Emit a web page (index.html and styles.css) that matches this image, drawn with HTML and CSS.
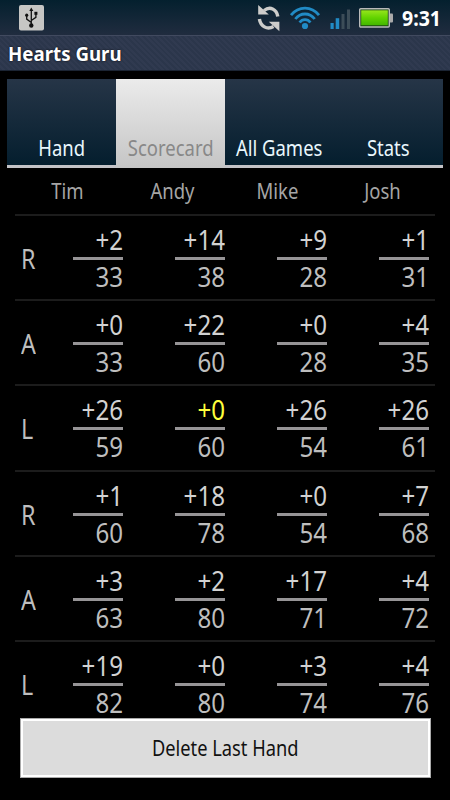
FILE: index.html
```html
<!DOCTYPE html>
<html lang="en">
<head>
<meta charset="UTF-8">
<meta name="viewport" content="width=device-width, initial-scale=1.0">
<title>Hearts Guru</title>
<link rel="stylesheet" href="styles.css">
</head>
<body>
	<!-- Status bar -->
	<div class="status-bar">
		<svg class="usb-icon" width="25" height="26" viewBox="0 0 25 26">
			<rect x="0" y="0" width="25" height="25.5" rx="2" fill="#c6c6c4"/>
			<path d="M12.3 5v16M12.3 17.5l-4.6-3.4v-3.6M12.3 15.5l4.6-3.2V8.8" fill="none" stroke="#111" stroke-width="1.3"/>
			<path d="M10.3 6l2-3.4 2 3.4z" fill="#111"/>
			<circle cx="12.3" cy="20.5" r="2.2" fill="#111"/>
			<circle cx="7.7" cy="10.2" r="1.6" fill="#111"/>
			<rect x="15.4" y="6.8" width="3" height="3" fill="#111"/>
		</svg>
		<div class="status-right">
			<svg class="sync-icon" width="24" height="28" viewBox="0 0 24 28">
				<path d="M7 6.5C13 2 19.5 5 20.8 12.5" fill="none" stroke="#cdcdcb" stroke-width="3.4"/>
				<path d="M1.2 1V10.4H11.8z" fill="#cdcdcb"/>
				<path d="M2.4 15C3.5 22 10 26.5 16.5 22.5" fill="none" stroke="#cdcdcb" stroke-width="3.4"/>
				<path d="M22.4 27.3V17.8H11.8z" fill="#cdcdcb"/>
			</svg>
			<svg class="wifi-icon" width="32" height="24" viewBox="0 0 32 24">
				<g fill="none" stroke="#218bc5" stroke-width="2.8">
					<path d="M2 9.2C9.5-.2 22.5-.2 30 9.2"/>
					<path d="M6.3 13C11.5 6.3 20.5 6.3 25.7 13"/>
					<path d="M10.6 16.5C13.5 12.6 18.5 12.6 21.4 16.5"/>
				</g>
				<circle cx="16" cy="20" r="3.1" fill="#218bc5"/>
			</svg>
			<svg class="signal-icon" width="21" height="21" viewBox="0 0 21 21">
				<rect x="0.5" y="14" width="3.2" height="6" fill="#218bc5"/>
				<rect x="5.7" y="9.2" width="3.5" height="10.8" fill="#218bc5"/>
				<rect x="11.5" y="5" width="3" height="15" fill="#3c4d58"/>
				<rect x="17" y="0.5" width="3" height="19.5" fill="#3c4d58"/>
			</svg>
			<svg class="battery-icon" width="34" height="20" viewBox="0 0 34 20">
				<defs>
					<linearGradient id="charge" x1="0" y1="0" x2="0" y2="1">
						<stop offset="0" stop-color="#96e51c"/>
						<stop offset="0.5" stop-color="#62d300"/>
						<stop offset="1" stop-color="#42b600"/>
					</linearGradient>
				</defs>
				<rect x="30" y="5.5" width="4" height="9" rx="1" fill="#aaa"/>
				<rect x="0.7" y="0.7" width="29.6" height="18.3" rx="1" fill="#154010" stroke="#bababa" stroke-width="1.4"/>
				<rect x="2.2" y="2.3" width="26.6" height="15" fill="url(#charge)"/>
			</svg>
			<span class="clock">9:31</span>
		</div>
	</div>

	<!-- Title bar -->
	<div class="title-bar"><span>Hearts Guru</span></div>

	<!-- Tabs -->
	<div class="tabs">
		<a class="tab"><span>Hand</span></a>
		<a class="tab active"><span>Scorecard</span></a>
		<a class="tab"><span>All Games</span></a>
		<a class="tab"><span>Stats</span></a>
	</div>

	<!-- Scorecard -->
	<div class="scorecard">
		<div class="players">
			<span>Tim</span><span>Andy</span><span>Mike</span><span>Josh</span>
		</div>
		<div class="hand">
			<span class="pass">R</span>
			<div class="score"><span>+2</span><hr><span>33</span></div>
			<div class="score"><span>+14</span><hr><span>38</span></div>
			<div class="score"><span>+9</span><hr><span>28</span></div>
			<div class="score"><span>+1</span><hr><span>31</span></div>
		</div>
		<div class="hand">
			<span class="pass">A</span>
			<div class="score"><span>+0</span><hr><span>33</span></div>
			<div class="score"><span>+22</span><hr><span>60</span></div>
			<div class="score"><span>+0</span><hr><span>28</span></div>
			<div class="score"><span>+4</span><hr><span>35</span></div>
		</div>
		<div class="hand">
			<span class="pass">L</span>
			<div class="score"><span>+26</span><hr><span>59</span></div>
			<div class="score moon"><span>+0</span><hr><span>60</span></div>
			<div class="score"><span>+26</span><hr><span>54</span></div>
			<div class="score"><span>+26</span><hr><span>61</span></div>
		</div>
		<div class="hand">
			<span class="pass">R</span>
			<div class="score"><span>+1</span><hr><span>60</span></div>
			<div class="score"><span>+18</span><hr><span>78</span></div>
			<div class="score"><span>+0</span><hr><span>54</span></div>
			<div class="score"><span>+7</span><hr><span>68</span></div>
		</div>
		<div class="hand">
			<span class="pass">A</span>
			<div class="score"><span>+3</span><hr><span>63</span></div>
			<div class="score"><span>+2</span><hr><span>80</span></div>
			<div class="score"><span>+17</span><hr><span>71</span></div>
			<div class="score"><span>+4</span><hr><span>72</span></div>
		</div>
		<div class="hand">
			<span class="pass">L</span>
			<div class="score"><span>+19</span><hr><span>82</span></div>
			<div class="score"><span>+0</span><hr><span>80</span></div>
			<div class="score"><span>+3</span><hr><span>74</span></div>
			<div class="score"><span>+4</span><hr><span>76</span></div>
		</div>
	</div>

	<button class="delete-button"><span>Delete Last Hand</span></button>
</body>
</html>
```
FILE: styles.css
```css
* {
	box-sizing: border-box;
}

body {
	width: 450px;
	height: 800px;
	margin: 0;
	overflow: hidden;
	background-color: #000;
	font-family: "Noto Sans", "Open Sans", sans-serif;
}

/* Labels are drawn slightly condensed */
.clock, .title-bar span, .tab span, .players span, .pass, .score span,
.delete-button span {
	display: block;
	white-space: nowrap;
	transform: scaleX(0.88);
}

/* Status bar */
.status-bar {
	display: flex;
	justify-content: space-between;
	height: 35px;
	padding: 5px 9px 0 19px;
	background: linear-gradient(#04202e, #202c3f);
}

.status-right {
	display: flex;
	align-items: flex-start;
}

.sync-icon {
	margin-top: -1px;
}

.wifi-icon {
	margin: 1px 0 0 8px;
}

.signal-icon {
	margin: 4px 0 0 9px;
}

.battery-icon {
	margin: 3px 0 0 8px;
}

.clock {
	width: 39px;
	margin-left: 9px;
	color: #fff;
	font-size: 21px;
	font-weight: bold;
	line-height: 26px;
	transform: scaleX(0.93);
	transform-origin: left;
}

/* Title bar */
.title-bar {
	height: 36px;
	padding-left: 8px;
	border-top: 1px solid #414a5f;
	border-bottom: 1px solid #1b2433;
	background: repeating-linear-gradient(45deg, #2b364b 0, #2b364b 2px, #303a50 2px, #303a50 4px);
	color: #fff;
	font-size: 20px;
	font-weight: bold;
	line-height: 36px;
	text-shadow: 0 0 2px #000;
}

.title-bar span {
	transform: scaleX(0.935);
	transform-origin: left;
}

/* Tabs */
.tabs {
	display: flex;
	height: 89px;
	margin: 8px 7px 0;
	border-bottom: 3px solid #c3c3c7;
	background: linear-gradient(#263547, #041e2e);
}

.tab {
	display: flex;
	flex: 1 0 0;
	justify-content: center;
	align-items: flex-end;
	padding-bottom: 2px;
	color: #e9f7fd;
	font-size: 21px;
	line-height: 29px;
}

.tab.active {
	margin-bottom: -3px;
	padding-bottom: 5px;
	background: linear-gradient(#ebebeb, #c5c5c5);
	color: #888;
}

/* Scorecard */
.scorecard {
	height: 551px;
	padding: 0 15px;
}

.players {
	display: grid;
	grid-template-columns: repeat(4, 1fr);
	height: 46px;
	color: #a5a5a5;
	font-size: 21px;
	line-height: 46px;
	text-align: center;
}

.hand {
	display: flex;
	gap: 52px;
	height: 85.2px;
	padding-left: 6px;
	border-top: 2px solid #1c1c1c;
	color: #bebebe;
	font-size: 26.5px;
}

.pass {
	width: 52px;
	margin-right: -52px;
	line-height: 86px;
	transform-origin: left;
}

.score {
	width: 50px;
	padding-top: 7px;
}

.score span {
	display: flex;
	justify-content: flex-end;
	line-height: 34px;
	transform: scaleX(0.91);
	transform-origin: right;
}

.score span:first-child {
	color: #d2d2d2;
}

.score span:last-child {
	margin-top: 3px;
	line-height: 28px;
}

.score hr {
	height: 3px;
	margin: 0;
	border: none;
	background-color: #969496;
}

.moon span:first-child {
	color: #ffff3c;
}

/* Delete button */
.delete-button {
	display: flex;
	justify-content: center;
	align-items: center;
	width: 411px;
	height: 60px;
	margin: -1px 0 0 20px;
	border: 1px solid #aaa;
	background-color: #dcdcdc;
	box-shadow: inset 0 0 0 2px #fff;
	color: #111;
	font-family: inherit;
	font-size: 21px;
}

.delete-button span {
	transform: scaleX(0.87);
}
```
